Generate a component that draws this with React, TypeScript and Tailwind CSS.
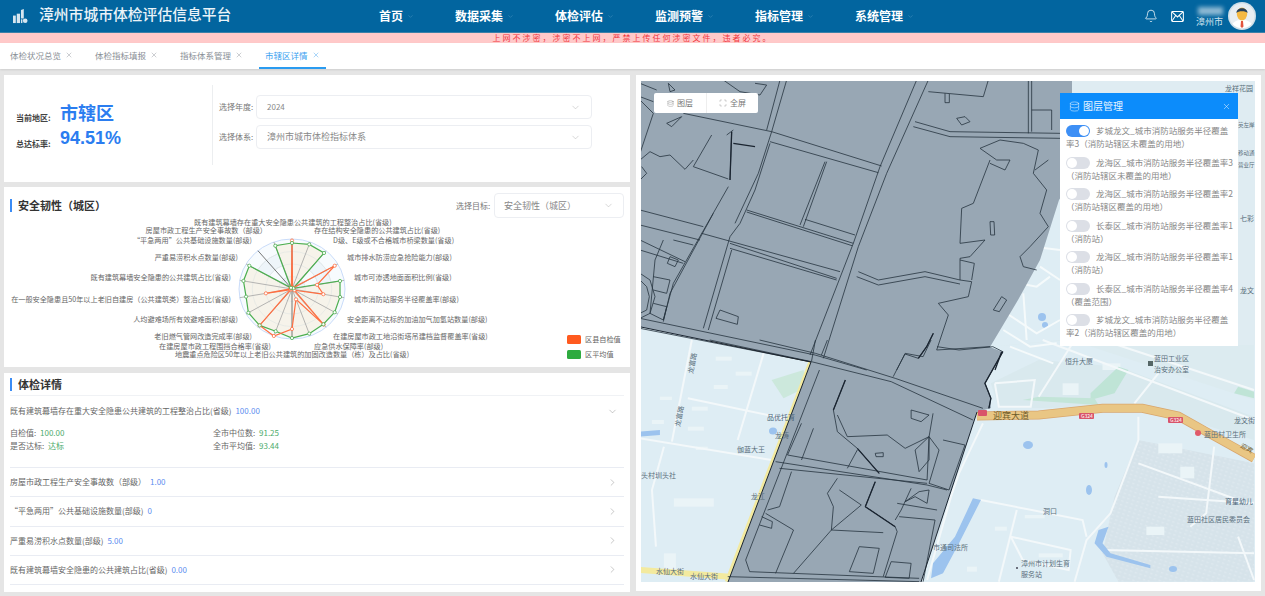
import { Bell, ChevronDown, ChevronRight, Database, Scan, X } from "lucide-react";

const font = { fontFamily: '"Noto Sans CJK SC", "Liberation Sans", sans-serif' };

const navItems = ["数据采集", "体检评估", "监测预警", "指标管理", "系统管理"];
const tabs = ["体检状况总览", "体检指标填报", "指标体系管理", "市辖区详情"];
const layers = [
  "芗城龙文_城市消防站服务半径覆盖率3（消防站辖区未覆盖的用地）",
  "龙海区_城市消防站服务半径覆盖率3（消防站辖区未覆盖的用地）",
  "龙海区_城市消防站服务半径覆盖率2（消防站辖区覆盖的用地）",
  "长泰区_城市消防站服务半径覆盖率1（消防站）",
  "龙海区_城市消防站服务半径覆盖率1（消防站）",
  "长泰区_城市消防站服务半径覆盖率4（覆盖范围）",
  "芗城龙文_城市消防站服务半径覆盖率2（消防站辖区覆盖的用地）",
];
const rows = [
  ["房屋市政工程生产安全事故数（部级）", "1.00"],
  ["“平急两用”公共基础设施数量(部级)", "0"],
  ["严重易涝积水点数量(部级)", "5.00"],
  ["既有建筑幕墙安全隐患的公共建筑占比(省级)", "0.00"],
];

// radar, clockwise from the top axis
const cx = 292;
const cy = 289;
const green = [0.92, 0.95, 0.94, 0.03, 0.92, 0.92, 0.93, 0.92, 0.95, 0.98, 0.9, 0.95, 0.95, 0.88, 0.93, 0.93, 0.03, 0.92];
const orange = [0.97, 0.03, 0.03, 0.93, 0.48, 0.6, 0.05, 0.93, 0.22, 0.8, 1, 0.95, 0.03, 0.5, 0.03, 0.03, 0.03, 0.03];
const darkAxes = [0, 9, 16];
const pt = (i: number, r: number): [number, number] => {
  const a = (i * 20 * Math.PI) / 180;
  return [cx + Math.sin(a) * r * 53, cy - Math.cos(a) * r * 50];
};
const poly = (vals: number[]) => vals.map((v, i) => pt(i, v).join(",")).join(" ");

const radarLabels: [string, number, number, "start" | "end"][] = [
  ["既有建筑幕墙存在重大安全隐患公共建筑的工程整治占比(省级)", 194, 225, "start"],
  ["房屋市政工程生产安全事故数（部级）", 267, 233, "end"],
  ["存在结构安全隐患的公共建筑占比(省级)", 314, 233, "start"],
  ["“平急两用”公共基础设施数量(部级)", 252, 243, "end"],
  ["D级、E级或不合格城市桥梁数量(省级)", 333, 243, "start"],
  ["严重易涝积水点数量(部级)", 238, 260, "end"],
  ["城市排水防涝应急抢险能力(部级)", 347, 260, "start"],
  ["既有建筑幕墙安全隐患的公共建筑占比(省级)", 231, 280, "end"],
  ["城市可渗透地面面积比例(省级)", 354, 280, "start"],
  ["在一般安全隐患且50年以上老旧自建房（公共建筑类）整治占比(省级)", 231, 302, "end"],
  ["城市消防站服务半径覆盖率(部级)", 354, 302, "start"],
  ["人均避难场所有效避难面积(部级)", 238, 322, "end"],
  ["安全距离不达标的加油加气加氢站数量(部级)", 347, 322, "start"],
  ["老旧燃气管网改造完成率(部级)", 252, 339, "end"],
  ["在建房屋市政工地沿街塔吊建档监督覆盖率(省级)", 333, 339, "start"],
  ["在建房屋市政工程围挡合格率(省级)", 271, 349, "end"],
  ["应急供水保障率(部级)", 314, 349, "start"],
  ["地震重点危险区50年以上老旧公共建筑的加固改造数量（栋）及占比(省级)", 175, 357, "start"],
];

// map traced from crops, two sets of crop coordinates
const p7 = (s: string) =>
  s.split(" ").map((q) => {
    const [x, y] = q.split(",").map(Number);
    return `${640 + x / 3},${80 + y / 3}`;
  }).join(" ");
const p6 = (s: string) =>
  s.split(" ").map((q) => {
    const [x, y] = q.split(",").map(Number);
    return `${640 + x / 2.508},${340 + y / 3}`;
  }).join(" ");

const lines7 = [
  "130,100 395,155 725,258",
  "390,185 715,278",
  "0,50 40,65",
  "830,0 720,260 640,490 510,825",
  "865,0 740,280 655,500 550,835",
  "440,0 395,155 355,280 285,430",
  "420,0 380,150",
  "390,190 345,330 300,430 270,470 190,745",
  "275,510 205,750",
  "320,390 640,490",
  "320,396 636,497",
  "0,390 190,440",
  "185,460 600,575",
  "0,435 180,480",
  "270,490 590,595",
  "270,505 590,600",
  "650,590 715,615 855,590 960,612",
  "655,575 715,600 855,575 960,600",
  "0,715 525,825 680,870",
  "0,745 510,845",
  "480,435 555,245",
  "490,440 560,245",
  "495,418 645,465",
  "265,320 100,610 70,720",
  "220,400 90,640 70,725",
  "275,155 270,300",
  "215,165 160,260 265,297",
  "0,240 30,215 60,230 90,225 135,268 160,240",
  "0,300 20,280 5,260",
  "0,480 135,545",
  "0,510 130,550",
  "70,480 45,540 30,700",
  "100,480 160,495",
  "40,590 90,600 80,640 40,630",
  "40,670 80,680 70,720 30,700",
  "90,530 115,540 105,560 82,550 90,530",
  "0,580 30,600 45,650 30,700 0,715",
  "0,600 20,620 28,650 20,690 0,700",
  "825,125 930,155 1260,160",
  "820,140 930,170 1260,175",
  "1165,0 1165,160",
  "1175,0 1175,155",
  "1175,90 1235,90 1235,150",
  "1020,205 1080,180 1150,190 1195,210 1180,280 1220,330 1200,400 1225,440 1170,500 1140,530 1150,560 1190,570",
  "1050,240 1000,370 965,385 960,490 1035,480 990,530 960,535 960,600 995,605 985,650 895,670 925,705 890,810 1050,800",
  "1020,205 1070,240 1110,240 1095,270 1050,250",
  "960,540 1003,550 995,600",
  "1225,240 1185,270",
  "880,760 860,800 835,835 795,822 770,870",
  "0,10 50,30",
  "85,10 105,30 90,35 85,10",
  "250,0 300,35 360,45 380,15 345,10",
  "80,130 125,110 95,140 80,130",
  "260,165 280,150",
  "865,35 1030,50 1045,0",
  "915,40 915,68 928,68 928,42",
  "950,115 975,110 990,125 965,135 950,115",
  "0,60 40,100 0,220",
  "228,715 240,690 295,710 292,733 228,715",
];
const thick7 = ["280,190 345,200", "275,155 270,300", "1085,815 1065,870", "880,760 860,800 835,835"];
const loops7 = ["1050,425 1062,425 1064,465 1052,465 1050,425", "1060,690 1085,650 1100,660 1078,695 1060,690"];

const lines6 = [
  "175,0 430,65 630,125 835,240",
  "300,0 440,40 640,115 860,205",
  "440,0 430,65",
  "470,0 455,45",
  "730,0 710,50 665,40 635,110",
  "745,20 800,30 885,20 910,35 865,130 880,175 875,205",
  "450,90 265,660 275,695 700,715",
  "515,120 485,210 495,275 545,325 600,400",
  "495,225 520,290 620,285 665,325 725,290 720,420",
  "735,220 725,290 750,330 725,430 775,450",
  "815,315 775,450",
  "760,300 815,315",
  "340,365 720,435 770,450",
  "350,385 720,430",
  "405,250 370,345 720,420",
  "435,265 405,360",
  "545,330 520,385",
  "590,425 565,500 640,560 645,575 610,710",
  "495,415 470,460 485,500 480,570 385,700",
  "500,450 555,495 480,570 610,578",
  "680,445 655,510 640,540",
  "645,490 745,510",
  "740,540 710,725",
  "650,530 740,540",
  "380,395 350,500 320,510",
  "315,520 385,570 340,700",
  "305,530 332,545 330,565 300,555",
  "550,620 525,695 585,700 600,625 550,620",
  "630,665 680,670 675,715 615,712 630,665",
  "665,485 700,455 725,450 720,490 690,470 665,485",
  "680,210 725,225 705,245 680,235 680,210",
  "590,340 610,338 610,350 592,350 590,340",
  "690,330 725,290 725,360 700,395 690,330",
  "220,710 700,725",
];
const thick6 = ["910,35 865,130 880,175 875,205", "565,500 640,560", "515,120 485,210", "590,425 565,500", "545,325 600,400"];

const white6 = [
  "130,0 80,305", "0,295 330,360", "310,40 245,300", "120,175 380,240", "60,320 30,450 40,620",
  "1000,170 1090,0", "1300,100 1240,190", "1250,230 1250,300 1180,520 1120,600 1090,725", "855,480 1110,540 1120,590",
  "945,510 900,725", "930,590 1080,630 1075,690 960,660 930,590", "1250,370 1500,480", "1440,320 1420,520 1380,560",
  "860,250 800,400 780,470 720,720", "1160,0 1540,150", "1010,0 1540,240", "890,130 990,120 980,200 900,200 890,130",
  "1300,470 1540,490", "1160,630 1540,640", "1500,590 1540,720",
];
const blocks6 = [
  [190, 50, 40, 12], [240, 95, 40, 12], [185, 135, 35, 12], [130, 200, 40, 12], [30, 240, 30, 12], [120, 260, 40, 12], [85, 475, 100, 25],
  [890, 560, 30, 12], [820, 680, 25, 15], [1000, 640, 60, 12], [965, 525, 50, 10], [1160, 70, 45, 20], [1060, 130, 40, 35], [1300, 310, 60, 30],
  [1355, 380, 35, 35], [1270, 560, 45, 25], [50, 170, 30, 10], [60, 640, 30, 50], [140, 320, 30, 10],
];

function MapLabel({ x, y, t, c = "#5a6f7c", s = 7 }: { x: number; y: number; t: string; c?: string; s?: number }) {
  return (
    <text x={x} y={y} fontSize={s} fill={c} style={font}>
      {t}
    </text>
  );
}

function MapDrawing() {
  return (
    <svg viewBox="641 81 614 501" className="block h-[501px] w-[614px]">
      <defs>
        <pattern id="houses" width="5" height="4" patternUnits="userSpaceOnUse" patternTransform="rotate(18)">
          <rect width="5" height="4" fill="#d6e3ea" />
          <rect x="1" y="1" width="2.500" height="1.500" fill="#dde8ee" />
        </pattern>
      </defs>
      <rect x="641" y="81" width="614" height="501" fill="#deedf4" />
      {/* lower right settlement */}
      <polygon points={p6("1250,300 1540,370 1540,725 1200,725 1160,640 1190,470")} fill="url(#houses)" />
      <polygon points={p6("1000,60 1200,80 1540,230 1540,300 1250,195 1000,205 900,205 880,130")} fill="#d9e9ee" />
      <polygon points={p6("880,20 1050,0 1540,0 1540,180 1080,0")} fill="#dcebf0" />
      <polygon points="1072,81 1255,81 1255,345 1060,345" fill="#dfecf2" />
      {blocks6.map((b, i) => (
        <rect key={i} x={640 + b[0] / 2.508} y={340 + b[1] / 3} width={b[2] / 2.508} height={b[3] / 3} fill="#eaf4f7" />
      ))}
      <polygon points={p6("1200,80 1225,90 1190,160 1130,180 1130,160")} fill="#bfe4d6" />
      <polygon points={p6("960,180 1150,195 1140,175 1000,170")} fill="#c3e5d8" />
      <polygon points={p6("1500,140 1540,155 1540,175 1490,160")} fill="#bfe4d6" />
      <polygon points={p6("330,120 410,90 420,140 360,175")} fill="#cce8dc" />
      {white6.map((w, i) => (
        <polyline key={i} points={p6(w)} fill="none" stroke="#f3f8fa" strokeWidth="2" />
      ))}
      {/* water */}
      <polygon points={p6("835,475 855,480 800,610 760,700 730,715 735,670 790,590")} fill="#9cc3ee" />
      <polygon points={p6("1150,570 1175,560 1160,610 1180,640 1280,675 1280,685 1170,650 1140,610")} fill="#9cc3ee" />
      <ellipse cx="1028" cy="445" rx="5" ry="4" fill="#9cc3ee" />
      <ellipse cx="1089" cy="490" rx="3" ry="5" fill="#9cc3ee" />
      <ellipse cx="1106" cy="465" rx="1.500" ry="3" fill="#9cc3ee" />
      <polygon points={p6("0,275 50,270 50,285 0,290")} fill="#9cc3ee" />
      <ellipse cx="773" cy="431" rx="4" ry="3.500" fill="#9cc3ee" />
      <ellipse cx="1173" cy="569" rx="4" ry="3" fill="#9cc3ee" />
      <circle cx="1042" cy="317" r="4" fill="#9cc3ee" />
      <circle cx="1045" cy="325" r="3" fill="#9cc3ee" />
      {/* north east housing */}
      {["1085,600 1190,620 1230,590", "1100,700 1190,760 1260,720", "1090,750 1170,800 1250,790", "1150,640 1160,780", "1200,560 1260,600", "1110,800 1240,850", "1180,500 1260,510"].map((w, i) => (
        <polyline key={i} points={p7(w)} fill="none" stroke="#f5fafb" strokeWidth="2" />
      ))}
      {/* 迎宾大道 */}
      <polyline points={p6("845,228 1000,225 1160,205 1260,205 1350,228 1450,295 1540,355")} fill="none" stroke="#d9a66c" strokeWidth="9" />
      <polyline points={p6("845,228 1000,225 1160,205 1260,205 1350,228 1450,295 1540,355")} fill="none" stroke="#e9c684" strokeWidth="7.500" />
      {/* left yellow road */}
      <polyline points={p6("432,65 222,725")} fill="none" stroke="#f3ea9f" strokeWidth="3.500" transform="translate(-2 0)" />
      <polyline points={p6("0,690 225,710")} fill="none" stroke="#f3ea9f" strokeWidth="6" />
      <polyline points={p6("170,0 430,65")} fill="none" stroke="#e2a94f" strokeWidth="1.500" />

      {/* parcel */}
      <polygon
        points="641,81 1072,81 1072,180 1059,200 1040,260 1018,300 990,347 1003,352 985,383 990,395 991,408 977,412 921,582 728,582 811,362 641,327"
        fill="#98a7b4"
      />
      <g fill="none" stroke="#26333f" strokeWidth="0.8" strokeLinejoin="round">
        {lines7.map((l, i) => (
          <polyline key={i} points={p7(l)} />
        ))}
        {loops7.map((l, i) => (
          <polyline key={i} points={p7(l)} />
        ))}
        {lines6.map((l, i) => (
          <polyline key={i} points={p6(l)} />
        ))}
      </g>
      <g fill="none" stroke="#1a2430" strokeWidth="1.300" strokeLinejoin="round">
        {thick7.map((l, i) => (
          <polyline key={i} points={p7(l)} />
        ))}
        {thick6.map((l, i) => (
          <polyline key={i} points={p6(l)} />
        ))}
        <polyline points="728,582 811,362 641,327" strokeWidth="1" />
        <polyline points="977,412 921,582" strokeWidth="1" />
      </g>

      {/* labels */}
      <MapLabel x={1065} y={364} t="恒升大厦" />
      <MapLabel x={1154} y={361} t="蓝田工业区" />
      <MapLabel x={1154} y={372} t="治安办公室" />
      <rect x="1148" y="361" width="5" height="5" fill="#566" />
      <text x="993" y="419" fontSize="9" fill="#6d5a28" style={font}>迎宾大道</text>
      {[[1079, 413], [1168, 417]].map(([x, y]) => (
        <g key={x}>
          <rect x={x} y={y} width="15" height="6" rx="1" fill="#d9546a" />
          <text x={x + 2} y={y + 5} fontSize="5" fill="#fff" style={font}>G324</text>
        </g>
      ))}
      <rect x="978" y="410" width="9" height="6" rx="1" fill="#d9546a" />
      <circle cx="1198" cy="433" r="3" fill="#e05a6a" />
      <MapLabel x={1204} y={437} t="蓝田村卫生所" />
      <MapLabel x={1234} y={423} t="龙文街" />
      <text transform="translate(1240 447) rotate(30)" fontSize="6.500" fill="#6d5a28" style={font}>迎宾</text>
      <MapLabel x={1225} y={504} t="育星幼儿" c="#4a6478" />
      <MapLabel x={1187} y={522} t="蓝田社区居民委员会" />
      <MapLabel x={1043} y={514} t="洞口" />
      <MapLabel x={1021} y={566} t="漳州市计划生育" />
      <MapLabel x={1021} y={577} t="服务站" />
      <circle cx="1017" cy="568" r="1" fill="#445" />
      <MapLabel x={933} y={550} t="市通司法所" />
      <MapLabel x={656} y={574} t="水仙大街" />
      <MapLabel x={690} y={579} t="水仙大街" />
      <MapLabel x={767} y={420} t="品优托育" c="#4a6478" />
      <MapLabel x={775} y={438} t="龙涛" />
      <MapLabel x={737} y={452} t="伽蓝大王" />
      <MapLabel x={641} y={478} t="头村圳头社" />
      <MapLabel x={751} y={499} t="龙江" />
      <text transform="translate(693 374) rotate(-80)" fontSize="7" fill="#5a6f7c" style={font}>龙富路</text>
      <text transform="translate(680 427) rotate(-80)" fontSize="7" fill="#5a6f7c" style={font}>龙富路</text>
      <MapLabel x={1225} y={91} t="龙祥花园" />
      <MapLabel x={1238} y={127} t="英左岸" s={5.500} />
      <MapLabel x={1238} y={155} t="移动通" s={5.500} />
      <MapLabel x={1238} y={167} t="营业厅" s={5.500} />
      <MapLabel x={1240} y={221} t="七彩" />
      <MapLabel x={1240} y={293} t="龙文" />
    </svg>
  );
}

function Radar() {
  return (
    <svg viewBox="4 218 626 149" className="block h-[149px] w-[626px]" style={font}>
      {[1, 0.75, 0.5, 0.25].map((r, i) => (
        <ellipse key={r} cx={cx} cy={cy} rx={53 * r} ry={50 * r} fill={i % 2 ? "#eef5fa" : "#f7fbfe"} stroke={i ? "#dbe7f2" : "#bcd3f7"} strokeWidth="0.8" />
      ))}
      <polygon points={poly(green)} fill="#f6f3ea" />
      {[0.75, 0.5, 0.25].map((r) => (
        <ellipse key={r} cx={cx} cy={cy} rx={53 * r} ry={50 * r} fill="none" stroke="#e3e7e4" strokeWidth="0.7" />
      ))}
      {green.map((_, i) => {
        const [x, y] = pt(i, 1);
        return <line key={i} x1={cx} y1={cy} x2={x} y2={y} stroke={darkAxes.includes(i) ? "#555" : "#a3a3a3"} strokeWidth="0.8" />;
      })}
      <polygon points={poly(green)} fill="none" stroke="#4caf50" strokeWidth="1.200" />
      <polygon points={poly(orange)} fill="none" stroke="#ff6f42" strokeWidth="1.200" />
      {orange.map((v, i) => {
        const [x, y] = pt(i, v);
        return <circle key={i} cx={x} cy={y} r="1.600" fill="#fff" stroke="#ff6f42" strokeWidth="0.8" />;
      })}
      {green.map((v, i) => {
        const [x, y] = pt(i, v);
        return <circle key={i} cx={x} cy={y} r="1.600" fill="#fff" stroke="#4caf50" strokeWidth="0.8" />;
      })}
      {radarLabels.map(([t, x, y, anchor]) => (
        <text key={t} x={x} y={y} fontSize="7.150" fill="#666" textAnchor={anchor}>
          {t}
        </text>
      ))}
      <rect x="567" y="335" width="14" height="9" rx="1.500" fill="#ff5a1f" />
      <rect x="567" y="350" width="14" height="9" rx="1.500" fill="#2eab3f" />
      <text x="585" y="342" fontSize="7.150" fill="#666">区县自检值</text>
      <text x="585" y="357" fontSize="7.150" fill="#666">区平均值</text>
    </svg>
  );
}

function Select({ value, className }: { value: string; className: string }) {
  return (
    <div className={`flex items-center justify-between rounded-[4px] border border-[#eceef2] bg-white text-[#888] ${className}`}>
      <span>{value}</span>
      <ChevronDown size={11} strokeWidth={1} className="text-[#aaa]" />
    </div>
  );
}

function Heading({ children }: { children: string }) {
  return (
    <div className="flex items-center gap-[6px]">
      <span className="h-[13px] w-[2px] bg-[#3b8cf5]" />
      <span className="text-[11px] font-bold leading-none text-[#333]">{children}</span>
    </div>
  );
}

export default function App() {
  return (
    <div className="flex h-[596px] w-full flex-col overflow-hidden bg-[#e5e5e5]" style={font}>
      <header className="flex h-[33px] shrink-0 items-center border-b border-[#3c80a8] bg-[#02659f] text-white">
        <svg viewBox="0 0 16 16" className="ml-[13px] h-[15px] w-[15px]" fill="#d7e6f0">
          <rect x="0" y="7" width="3" height="8" />
          <rect x="4" y="5" width="3.500" height="10" />
          <path d="M8.500 1 L11.500 0 V10 H8.500 Z" />
          <rect x="8.500" y="11" width="1.500" height="4" />
          <circle cx="13" cy="12.500" r="2.500" />
        </svg>
        <span className="-mt-[3px] ml-[11px] w-[192px] whitespace-nowrap text-[14.800px] font-medium leading-none text-[#eaf3f8]">漳州市城市体检评估信息平台</span>
        <nav className="ml-[148px] flex text-[12px] font-bold leading-none">
          <div className="flex w-[76px] items-center gap-[4px]">
            <span>首页</span>
            <ChevronDown size={7} className="text-[#3f8dbb]" />
          </div>
          {navItems.map((n) => (
            <div key={n} className="flex w-[100px] items-center gap-[4px]">
              <span>{n}</span>
              <ChevronDown size={7} className="text-[#3f8dbb]" />
            </div>
          ))}
        </nav>
        <div className="ml-auto flex items-center">
          <Bell size={14} strokeWidth={1.300} />
          <svg viewBox="0 0 14 12" className="ml-[13px] h-[11px] w-[13px]" fill="none" stroke="#fff" strokeWidth="1.100">
            <rect x="0.600" y="0.600" width="12.800" height="10.800" rx="1" />
            <path d="M1 1 L7 6.500 L13 1 M1 11 L5 5 M13 11 L9 5" />
          </svg>
          <div className="ml-[12px] flex w-[27px] flex-col items-end">
            <span className="h-[8px] w-[25px] bg-[#8fbad4] blur-[2px]" />
            <span className="mt-[2px] whitespace-nowrap text-[9px] leading-none text-[#cfe2ee]">漳州市</span>
          </div>
          <svg viewBox="0 0 28 28" className="ml-[5px] mr-[9px] h-[28px] w-[28px]">
            <circle cx="14" cy="14" r="14" fill="#cfdfe8" />
            <circle cx="14" cy="14" r="12.500" fill="#e8eef2" />
            <path d="M4.500 22 C7 18.500 10 18 14 18 C18 18 21 18.500 23.500 22 C19 27.500 9 27.500 4.500 22 Z" fill="#fff" />
            <path d="M13 19 H15 L15.500 24.500 L14 26 L12.500 24.500 Z" fill="#e2543e" />
            <ellipse cx="14" cy="12" rx="5.200" ry="6.500" fill="#f5b942" />
            <path d="M8.500 11 C8 4.500 20 4.500 19.500 11 C18 8.500 10 8.500 8.500 11 Z" fill="#27415c" />
          </svg>
        </div>
      </header>

      <div className="h-[10px] shrink-0 bg-[#ffc9c9] text-center text-[8px] leading-[10px] tracking-[2px] text-[#f0343c]">
        上网不涉密，涉密不上网，严禁上传任何涉密文件，违者必究。
      </div>

      <div className="flex h-[26px] shrink-0 bg-white pl-[4px] shadow-[0_1px_2px_rgba(0,0,0,0.1)]">
        {tabs.map((t, i) => (
          <div key={t} className={`mr-[10px] flex h-full items-center gap-[4px] border-b-2 px-[6px] text-[8.500px] leading-none ${i === 3 ? "border-[#2a9bf0] text-[#3a9ff0]" : "border-transparent text-[#8a8f96]"}`}>
            <span>{t}</span>
            <X size={8} strokeWidth={1.300} />
          </div>
        ))}
      </div>

      <main className="flex min-h-0 flex-1 gap-[6px] pl-[4px] pt-[6px]">
        <div className="flex w-[626px] shrink-0 flex-col gap-[5px]">
          <section className="flex h-[107px] items-center bg-white pb-[13px]">
            <div className="mt-[5px] w-[208px] pl-[12px]">
              <div className="flex items-end">
                <span className="mb-[3px] w-[44px] text-[8px] font-bold leading-none text-[#444]">当前地区:</span>
                <span className="text-[18px] font-bold leading-[26px] text-[#2b7df0]">市辖区</span>
              </div>
              <div className="flex items-end">
                <span className="mb-[3px] w-[44px] text-[8px] font-bold leading-none text-[#444]">总达标率:</span>
                <span className="text-[18px] font-bold leading-[26px] text-[#2b7df0]" style={{ fontFamily: '"Liberation Sans", sans-serif' }}>94.51%</span>
              </div>
            </div>
            <div className="mt-[6px] h-[80px] w-px bg-[#eceef0]" />
            <div className="ml-[6px] flex flex-col gap-[6px] text-[8px] text-[#777]">
              <div className="flex items-center">
                <span className="w-[37px]">选择年度:</span>
                <Select value="2024" className="h-[24px] w-[336px] px-[10px]" />
              </div>
              <div className="flex items-center">
                <span className="w-[37px]">选择体系:</span>
                <Select value="漳州市城市体检指标体系" className="h-[24px] w-[336px] px-[10px] text-[9px]" />
              </div>
            </div>
          </section>

          <section className="h-[180px] bg-white">
            <div className="flex h-[31px] items-center justify-between pl-[6px] pr-[6px] pt-[6px]">
              <Heading>安全韧性（城区）</Heading>
              <div className="flex items-center text-[8px] text-[#777]">
                <span className="w-[38px]">选择目标:</span>
                <Select value="安全韧性（城区）" className="h-[25px] w-[130px] px-[9px] text-[9px]" />
              </div>
            </div>
            <Radar />
          </section>

          <section className="mt-[1px] h-[219px] bg-white px-[6px] text-[8px] leading-none text-[#666]">
            <div className="flex h-[23px] items-center border-b border-[#f0f2f5] pt-[1px]">
              <Heading>体检详情</Heading>
            </div>
            <div className="h-[72px] border-b border-[#e9ecf3]">
              <div className="flex h-[30px] items-center justify-between">
                <span>
                  既有建筑幕墙存在重大安全隐患公共建筑的工程整治占比(省级)
                  <span className="ml-[4px] text-[#5b8def]">100.00</span>
                </span>
                <ChevronDown size={11} strokeWidth={1} className="mr-[6px] text-[#888]" />
              </div>
              <div className="mt-[3px] grid grid-cols-[203px_1fr] gap-y-[5px]">
                <span>自检值: <span className="ml-[2px] text-[#4cab6b]">100.00</span></span>
                <span>全市中位数: <span className="ml-[2px] text-[#4cab6b]">91.25</span></span>
                <span>是否达标: <span className="ml-[2px] text-[#4cab6b]">达标</span></span>
                <span>全市平均值: <span className="ml-[2px] text-[#4cab6b]">93.44</span></span>
              </div>
            </div>
            {rows.map(([t, v]) => (
              <div key={t} className="flex h-[29.250px] items-center justify-between border-b border-[#e9ecf3]">
                <span>
                  {t}
                  <span className="ml-[4px] text-[#5b8def]">{v}</span>
                </span>
                <ChevronRight size={11} strokeWidth={1} className="mr-[6px] text-[#888]" />
              </div>
            ))}
          </section>
        </div>

        <div className="relative h-[516px] w-[625px] shrink-0 bg-white px-[5px] pt-[6px]">
          <MapDrawing />

          <div className="absolute left-[18px] top-[18px] flex h-[20px] w-[104px] items-center rounded-[2px] bg-white text-[8px] leading-none text-[#777]">
            <div className="flex h-full w-[53px] items-center justify-center gap-[3px] border-r border-[#eee]">
              <Database size={7} strokeWidth={1.200} />
              图层
            </div>
            <div className="flex h-full flex-1 items-center justify-center gap-[3px]">
              <Scan size={8} strokeWidth={1.200} />
              全屏
            </div>
          </div>

          <div className="absolute left-[424px] top-[18px] h-[253px] w-[178px] bg-white">
            <div className="flex h-[26px] items-center bg-[#0c8cfb] pl-[9px] pr-[7px] text-[10px] leading-none text-[#e8f4ff]">
              <Database size={11} strokeWidth={1.200} />
              <span className="ml-[3px]">图层管理</span>
              <X size={9} strokeWidth={1.400} className="ml-auto" />
            </div>
            <div className="flex flex-col gap-[5.500px] pl-[6px] pr-[4px] pt-[5px] text-[8.500px] leading-[13px] text-[#888]">
              {layers.map((l, i) => (
                <div key={l}>
                  <span className={`mr-[6px] inline-flex h-[12px] w-[24px] items-center rounded-full align-[-2px] ${i === 0 ? "justify-end bg-[#3d8ff5]" : "bg-[#dcdfe6]"}`}>
                    <span className="mx-[1px] h-[10px] w-[10px] rounded-full bg-white" />
                  </span>
                  {l}
                </div>
              ))}
            </div>
          </div>
        </div>
      </main>
    </div>
  );
}
